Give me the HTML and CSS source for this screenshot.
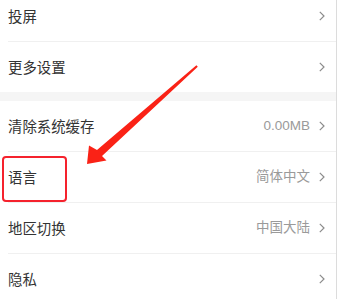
FILE: index.html
```html
<!DOCTYPE html>
<html lang="zh-CN">
<head>
<meta charset="utf-8">
<link rel="stylesheet" href="styles.css">
</head>
<body>
<div class="page">
  <div class="list">
    <div class="group">
      <div class="row"><span class="label">投屏</span><span class="right"><svg class="chev" viewBox="0 0 6 10" width="6" height="10"><polyline points="0.8,0.8 5,5 0.8,9.2"/></svg></span></div>
      <div class="row last"><span class="label">更多设置</span><span class="right"><svg class="chev" viewBox="0 0 6 10" width="6" height="10"><polyline points="0.8,0.8 5,5 0.8,9.2"/></svg></span></div>
    </div>
    <div class="band"></div>
    <div class="group">
      <div class="row"><span class="label">清除系统缓存</span><span class="right"><span class="value">0.00MB</span><svg class="chev" viewBox="0 0 6 10" width="6" height="10"><polyline points="0.8,0.8 5,5 0.8,9.2"/></svg></span></div>
      <div class="row"><span class="label">语言</span><span class="right"><span class="value">简体中文</span><svg class="chev" viewBox="0 0 6 10" width="6" height="10"><polyline points="0.8,0.8 5,5 0.8,9.2"/></svg></span></div>
      <div class="row"><span class="label">地区切换</span><span class="right"><span class="value">中国大陆</span><svg class="chev" viewBox="0 0 6 10" width="6" height="10"><polyline points="0.8,0.8 5,5 0.8,9.2"/></svg></span></div>
      <div class="row"><span class="label">隐私</span><span class="right"><svg class="chev" viewBox="0 0 6 10" width="6" height="10"><polyline points="0.8,0.8 5,5 0.8,9.2"/></svg></span></div>
    </div>
  </div>
  <div class="highlight"></div>
  <svg class="arrow" viewBox="0 0 339 299" width="339" height="299">
    <polygon points="87,164 89,145.5 97,150 196.4,65.2 197.8,66.8 102,156 106.5,160.5"/>
  </svg>
</div>
</body>
</html>
```
FILE: styles.css
```css
html, body {
  margin: 0;
  padding: 0;
  background: #fff;
}
body {
  width: 339px;
  height: 299px;
  overflow: hidden;
  font-family: "Noto Sans CJK SC", "Noto Sans", sans-serif;
}
.page {
  position: relative;
  width: 339px;
  height: 299px;
  overflow: hidden;
}
.list {
  width: 336px;
  border-right: 1px solid #dcdcdc;
  margin-top: -9px;
  min-height: 320px;
}
.row {
  height: 50px;
  display: flex;
  align-items: center;
  justify-content: space-between;
  margin-left: 8px;
  padding: 0 11px 0 0;
  border-bottom: 1px solid #f0f0f0;
  box-sizing: content-box;
}
.row.last {
  border-bottom: none;
}
.label {
  font-size: 14.4px;
  color: #333;
  line-height: 1;
  padding-top: 1px;
}
.right {
  display: flex;
  align-items: center;
  gap: 9px;
}
.value {
  font-family: "Liberation Sans", "Noto Sans CJK SC", sans-serif;
  font-size: 13.5px;
  color: #9a9a9a;
  line-height: 1;
}
.chev {
  display: block;
}
.chev polyline {
  fill: none;
  stroke: #8c8c8c;
  stroke-width: 1.2;
}
.band {
  height: 9px;
  background: #f5f5f5;
}
.highlight {
  position: absolute;
  left: 2px;
  top: 156px;
  width: 61px;
  height: 42px;
  border: 2px solid #f5222d;
  border-radius: 4px;
}
.arrow {
  position: absolute;
  left: 0;
  top: 0;
}
.arrow polygon {
  fill: #fa2216;
}
```
